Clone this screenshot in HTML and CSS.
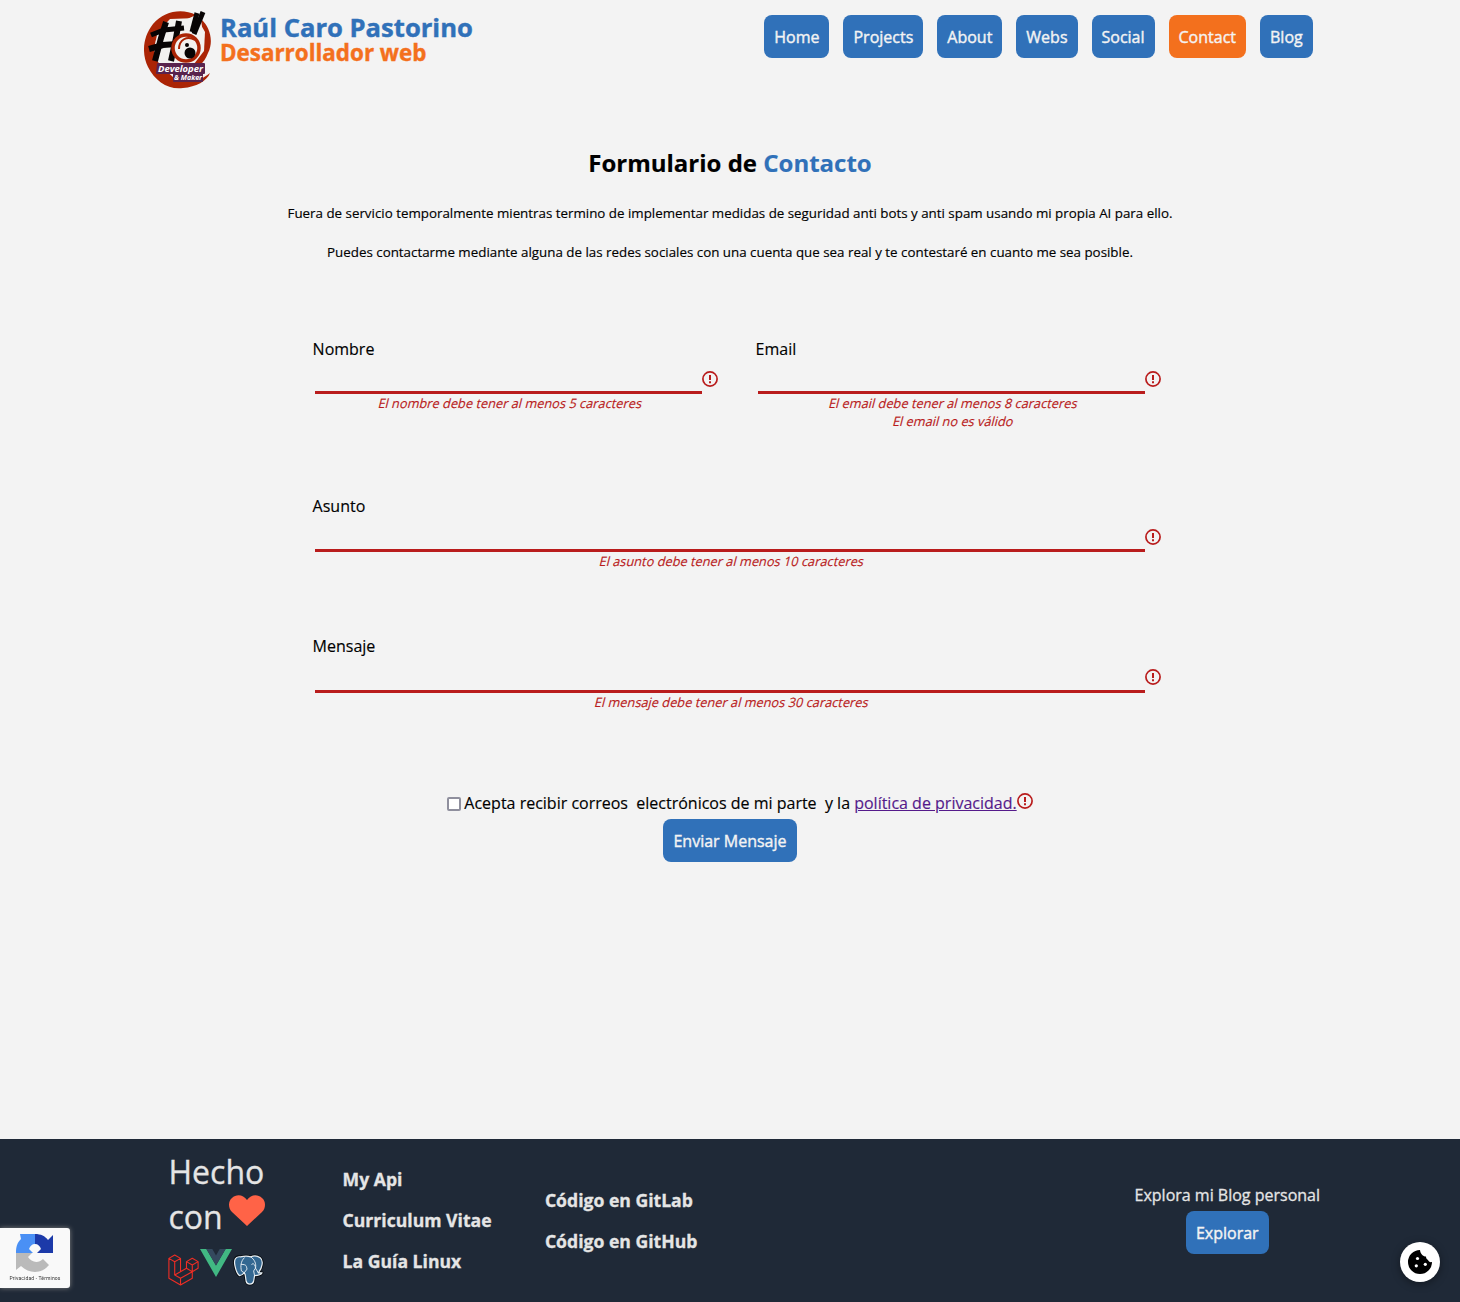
FILE: index.html
```html
<!DOCTYPE html>
<html lang="es">
<head>
<meta charset="utf-8">
<title>Contacto - Raúl Caro Pastorino</title>
<link rel="stylesheet" href="styles.css">
</head>
<body>
<svg class="defs" width="0" height="0" aria-hidden="true">
  <symbol id="warn" viewBox="0 0 16 16">
    <circle cx="8" cy="8" r="7.1" fill="none" stroke="#b91c1c" stroke-width="1.7"/>
    <path d="M8 4v5" stroke="#b91c1c" stroke-width="2"/>
    <path d="M8 10.3v1.9" stroke="#b91c1c" stroke-width="2"/>
  </symbol>
</svg>
<header class="header">
  <a class="brand">
    <svg class="logo" viewBox="0 0 68 78">
      <path d="M52 4C38-3 20 0 9 13C-2 27-2 44 4 56C11 70 24 79 39 77C52 76 63 70 66 62C54 72 40 74 29 66L20 58C12 50 9 43 11 33C13 19 26 9 41 9Z" fill="#ab2405"/>
      <path d="M57 8C66 16 70 30 64 42C60 53 51 61 38 60L30 57L42 53C54 50 62 38 59 24Z" fill="#ab2405"/>
      <path d="M26 8L53 7L61 21L60 40L50 53L24 57L11 45L13 22Z" fill="#f3f1ef"/>
      <g fill="none" stroke="#080404">
        <path d="M22 11L17 27L11 50" stroke-width="6"/><path d="M35 10L32 27L27 50" stroke-width="6"/>
        <path d="M7 24L20 19L40 17" stroke-width="5"/><path d="M5 38L19 34L33 33" stroke-width="6"/>
        <path d="M59 1L50 23" stroke-width="5"/><path d="M53 2L48 21" stroke-width="5"/>
      </g>
      <circle cx="42" cy="37" r="13" fill="#f3f1ef" stroke="#ab2405" stroke-width="3.500"/>
      <path d="M35 38C35 29 43 24 51 29" fill="none" stroke="#ab2405" stroke-width="2"/>
      <circle cx="46" cy="42" r="5.500" fill="#080404"/>
      <circle cx="43" cy="34" r="2" fill="#080404"/>
      <path d="M14 53H60V62H58V70H30V62H13Z" fill="#59234d" stroke="#59234d" stroke-width="2" stroke-linejoin="round"/>
      <text x="14" y="61" textLength="45" lengthAdjust="spacingAndGlyphs" class="logo-text">Developer</text>
      <text x="30" y="69" textLength="28" lengthAdjust="spacingAndGlyphs" class="logo-text logo-text-small">&amp; Maker</text>
    </svg>
    <span class="brand-text"><span class="brand-name">Raúl Caro Pastorino</span><span class="brand-role">Desarrollador web</span></span>
  </a>
  <nav class="nav">
    <a class="btn">Home</a><a class="btn">Projects</a><a class="btn">About</a><a class="btn">Webs</a><a class="btn">Social</a><a class="btn btn-active">Contact</a><a class="btn">Blog</a>
  </nav>
</header>
<main class="main">
  <h1 class="title">Formulario de <span class="accent">Contacto</span></h1>
  <p class="notice">Fuera de servicio temporalmente mientras termino de implementar medidas de seguridad anti bots y anti spam usando mi propia AI para ello.</p>
  <p class="notice">Puedes contactarme mediante alguna de las redes sociales con una cuenta que sea real y te contestaré en cuanto me sea posible.</p>
  <form class="form">
    <div class="field">
      <label class="label" for="nombre">Nombre</label>
      <div class="control"><input class="input" id="nombre"><svg class="warn"><use href="#warn"/></svg></div>
      <div class="errors"><div class="error">El nombre debe tener al menos 5 caracteres</div></div>
    </div>
    <div class="field">
      <label class="label" for="email">Email</label>
      <div class="control"><input class="input" id="email"><svg class="warn"><use href="#warn"/></svg></div>
      <div class="errors"><div class="error">El email debe tener al menos 8 caracteres</div><div class="error">El email no es válido</div></div>
    </div>
    <div class="field field-wide">
      <label class="label" for="asunto">Asunto</label>
      <div class="control"><input class="input" id="asunto"><svg class="warn"><use href="#warn"/></svg></div>
      <div class="errors"><div class="error">El asunto debe tener al menos 10 caracteres</div></div>
    </div>
    <div class="field field-wide field-message">
      <label class="label" for="mensaje">Mensaje</label>
      <div class="control"><input class="input" id="mensaje"><svg class="warn"><use href="#warn"/></svg></div>
      <div class="errors"><div class="error">El mensaje debe tener al menos 30 caracteres</div></div>
    </div>
  </form>
  <div class="consent"><input type="checkbox" class="check"><span class="consent-text">Acepta recibir correos&nbsp; electrónicos de mi parte&nbsp; y la <a class="policy">política de privacidad.</a></span><svg class="warn warn-consent"><use href="#warn"/></svg></div>
  <button class="btn">Enviar Mensaje</button>
</main>
<footer class="footer">
  <div class="made">
    <div class="made-line">Hecho</div>
    <div class="made-line">con <svg class="heart" viewBox="0 0 36 31"><path d="M18 31L3 17C-1 13-1 6 3 3C7-1 14-1 18 5C22-1 29-1 33 3C37 6 37 13 33 17Z" fill="#ff6347"/></svg></div>
    <div class="tech">
      <svg class="laravel" viewBox="0 0 24 24" fill="none" stroke="#ef2d24" stroke-width=".85" stroke-linejoin="round"><path d="M.7 3L5.2.4L9.7 3L5.2 5.6ZM.7 3V18.4L9.7 23.6L18.8 18.4V13.3L23.3 10.7V5.5L18.8 2.9L14.3 5.5V10.7L18.8 13.3M14.3 5.5L18.8 8.1L23.3 5.5M18.8 8.1V13.3L9.7 18.4L5.2 15.9V5.6M9.7 3V13.3M5.2 15.9L14.3 10.7M9.7 18.4V23.6"/></svg>
      <svg class="vue" viewBox="0 0 32 28"><path d="M0 0H6.4L16 16.5L25.6 0H32L16 28Z" fill="#41b883"/><path d="M6.4 0H12.3L16 6.4L19.7 0H25.6L16 16.5Z" fill="#34495e"/></svg>
      <svg class="postgres" viewBox="0 0 32 32" stroke-linejoin="round" stroke-linecap="round">
        <path d="M8 2C2 1 1 6 2 11C3 16 5 21 7 22C9 22 11 20 12 19L13 21L14 28C15 32 21 32 22 28L23 22C27 22 30 21 31 19L27 19C31 14 33 6 29 3C25 0 21 1 19 2C16 1 12 1 8 2Z" fill="#336791" stroke="#05090d" stroke-width="3"/>
        <path d="M8 2C2 1 1 6 2 11C3 16 5 21 7 22C9 22 11 20 12 19L13 21L14 28C15 32 21 32 22 28L23 22C27 22 30 21 31 19L27 19C31 14 33 6 29 3C25 0 21 1 19 2C16 1 12 1 8 2Z" fill="#336791" stroke="#e8eef3" stroke-width="1.3"/>
        <path d="M12 19L9 17C8 12 8 7 12 3M12 19L15 15C14 12 15 10 9 10M19 2C23 5 25 9 24 14L27 19M23 22L22 17L24 14C24 10 21 8 20 10" fill="none" stroke="#e8eef3" stroke-width="1"/>
      </svg>
    </div>
  </div>
  <div class="links"><a>My Api</a><a>Curriculum Vitae</a><a>La Guía Linux</a></div>
  <div class="links links-code"><a>Código en GitLab</a><a>Código en GitHub</a></div>
  <div class="blog"><span class="blog-text">Explora mi Blog personal</span><a class="btn">Explorar</a></div>
</footer>
<div class="captcha">
  <svg class="captcha-logo" viewBox="0 0 38 38">
    <path d="M19 0V10C16 10 14 12 13 15L17 19H0C0 13 1 9 5 5L4 0Z" fill="#4a90f5"/>
    <path d="M19 0C25 0 29 2 32 6L37 1V19H21L25 15C24 12 22 10 19 10Z" fill="#1c3aa9"/>
    <path d="M0 19L0 36L5 32C13 40 26 40 33 31L27 25C22 30 15 28 12 23L16 19Z" fill="#bababa"/>
  </svg>
  <span class="captcha-text">Privacidad - Términos</span>
</div>
<div class="cookie"><svg width="24" height="24" viewBox="0 0 24 24"><path d="M12 0A12 12 0 1 0 24 12C22 12.500 20.500 11.500 20 10C18.500 9 18 8 18 6.500C15 6.500 12.500 4 12 0Z"/><circle cx="9.500" cy="8.500" r="1.600" fill="#fff"/><circle cx="17.300" cy="14.300" r="1.600" fill="#fff"/><circle cx="8.300" cy="15.800" r="1.600" fill="#fff"/></svg></div>
</body>
</html>
```
FILE: styles.css
```css
* { box-sizing: border-box; }
body { margin: 0; min-height: 1302px; display: flex; flex-direction: column; background: #f3f3f3; color: #000; font: 16px/24px "Open Sans", "Noto Sans", sans-serif; -webkit-text-stroke: .15px; }
.defs { position: absolute; }
.header { display: flex; justify-content: space-between; align-items: flex-start; height: 139px; padding: 11px 147.3px 0 144px; }
.brand { display: flex; gap: 8px; }
.logo { width: 68px; height: 78px; }
.logo-text { font: italic bold 8px "Open Sans", sans-serif; fill: #fff; }
.logo-text-small { font-size: 7px; }
.brand-text { display: flex; flex-direction: column; padding-top: 4px; font-weight: 700; -webkit-text-stroke: .4px; }
.brand-name { color: #3071b9; font-size: 25.6px; line-height: 25px; }
.brand-role { color: #f3701d; font-size: 22.4px; line-height: 26px; }
.nav { display: flex; gap: 14px; padding-top: 4px; }
.btn { display: inline-block; height: 43px; padding: 11px 10px 9px; border: 0; border-radius: 8px; background: #3071b9; color: #f3f3f3; font: 16px/23px "Open Sans", "Noto Sans", sans-serif; white-space: nowrap; -webkit-text-stroke: .4px; }
.btn-active { background: #f3701d; }
.main { flex: 1; display: flex; flex-direction: column; align-items: center; }
.title { margin: 6px 0 31px; font-size: 24px; line-height: 36px; font-weight: 700; }
.accent { color: #3071b9; }
.notice { margin: -9px 0 28px; font-size: 13.35px; line-height: 20px; }
.form { display: grid; grid-template-columns: 406px 406px; column-gap: 37px; width: 849px; margin: 47px 0 0 13px; }
.field-wide { grid-column: 1 / -1; margin-top: 64px; }
.label { display: block; padding-left: .6px; }
.control { display: flex; height: 33px; padding-left: 3px; }
.field-wide .control { height: 34px; }
.field-message .control { height: 35px; }
.input { flex: 1; min-width: 0; padding: 0; border: 0; border-bottom: 3px solid #b91c1c; background: none; outline: 0; }
.warn { width: 16px; height: 16px; margin-top: 10px; }
.field-wide .warn { margin-top: 11px; }
.errors { padding: 0 14.5px 0 4.5px; }
.error { text-align: center; color: #b91c1c; font-size: 12.8px; line-height: 18px; transform: skewX(-14deg); }
.consent { display: flex; height: 24px; margin: 80px 0 4px 20px; }
.check { appearance: none; width: 14px; height: 14px; margin: 6px 3px 0 0; border: 2px solid #8f8f9d; border-radius: 2px; background: #fff; }
.policy { color: #551a8b; text-decoration: underline; }
.warn-consent { margin-top: 2px; }
.footer { display: flex; height: 163px; padding: 0 140px 0 168px; background: #1f2937; color: #e5e5e5; -webkit-text-stroke: .3px; }
.made { width: 174.6px; padding-top: 10px; }
.made-line { padding-left: .5px; font-size: 32px; line-height: 45px; white-space: nowrap; }
.heart { width: 36px; height: 31px; margin-left: -2px; vertical-align: 3px; }
.tech { display: flex; gap: 1px; padding-top: 8px; }
.laravel { width: 31px; height: 34px; margin-top: 6px; }
.vue { width: 32px; height: 28px; margin-top: 2px; }
.postgres { width: 30px; height: 32px; margin-top: 7px; overflow: visible; }
.links { display: flex; flex-direction: column; gap: 17px; width: 202.3px; padding-top: 28px; font-size: 17.6px; font-weight: 700; white-space: nowrap; }
.links-code { padding-top: 49px; }
.blog { display: flex; flex-direction: column; align-items: center; gap: 4px; margin-left: auto; padding-top: 44px; }
.captcha { position: fixed; left: 0; bottom: 14px; width: 70px; height: 60px; display: flex; flex-direction: column; align-items: center; padding-top: 6px; background: #f9f9f9; border-radius: 0 3px 3px 0; box-shadow: 0 0 5px #808080; }
.captcha-logo { width: 38px; height: 38px; }
.captcha-text { font: 5px/12px Roboto, sans-serif; color: #333; letter-spacing: .15px; -webkit-text-stroke: 0; }
.cookie { position: fixed; right: 20px; bottom: 20px; width: 40px; height: 40px; display: flex; align-items: center; justify-content: center; border-radius: 50%; background: #fff; box-shadow: 0 2px 8px #0006; }
```
